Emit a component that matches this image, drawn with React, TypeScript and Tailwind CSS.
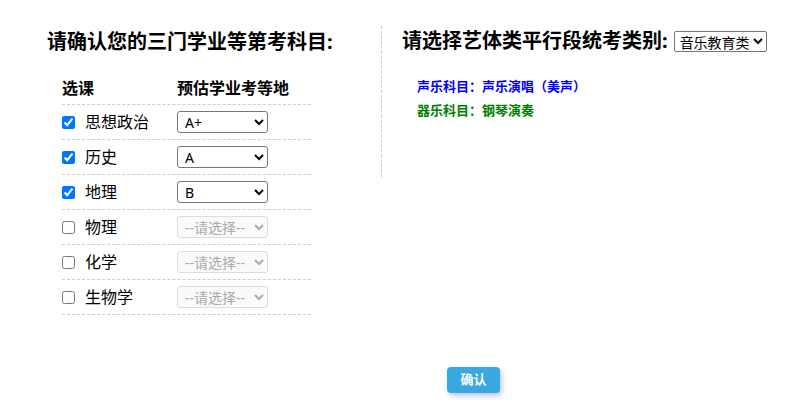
import React from 'react';

const font = { fontFamily: '"Noto Sans", "Noto Sans CJK SC", sans-serif' };

interface Subject {
  name: string;
  checked: boolean;
  grade: string;
}

const subjects: Subject[] = [
  { name: '思想政治', checked: true, grade: 'A+' },
  { name: '历史', checked: true, grade: 'A' },
  { name: '地理', checked: true, grade: 'B' },
  { name: '物理', checked: false, grade: '' },
  { name: '化学', checked: false, grade: '' },
  { name: '生物学', checked: false, grade: '' },
];

const grades = ['A+', 'A', 'B+', 'B', 'B-', 'C+', 'C', 'D', 'E'];

const SubjectRow = ({ s }: { s: Subject }) => (
  <div className="flex items-center h-[35px] border-b border-dashed border-[#cccccc]">
    <div className="w-[115px] flex items-center">
      <input type="checkbox" defaultChecked={s.checked} className="m-0 w-[13px] h-[13px]" />
      <span className="ml-[10px] text-[16px] text-black">{s.name}</span>
    </div>
    {s.checked ? (
      <select
        defaultValue={s.grade}
        className="w-[91px] h-[22px] border border-[#767676] rounded-[3px] bg-white text-[14px] text-black pl-[3px]"
      >
        {grades.map((g) => (
          <option key={g} value={g}>{g}</option>
        ))}
      </select>
    ) : (
      <select
        disabled
        defaultValue=""
        className="w-[91px] h-[22px] border border-[#dddddd] rounded-[3px] bg-[#fafafa] text-[14px] text-[#aaaaaa] pl-[3px]"
      >
        <option value="">--请选择--</option>
      </select>
    )}
  </div>
);

export default function App() {
  return (
    <div className="w-[786px] h-[412px] bg-white text-black overflow-hidden" style={font}>
      <div className="flex pt-[26px]">
        {/* left: subjects */}
        <div className="w-[381px] pl-[47px]">
          <h2 className="h-[32px] leading-[32px] text-[20px] font-bold">请确认您的三门学业等第考科目:</h2>
          <div className="ml-[15px] mt-[14px] w-[249px]">
            <div className="flex items-center h-[33px] border-b border-dashed border-[#cccccc] text-[16px] font-bold">
              <span className="w-[115px]">选课</span>
              <span>预估学业考等地</span>
            </div>
            {subjects.map((s) => (
              <SubjectRow key={s.name} s={s} />
            ))}
          </div>
        </div>

        {/* right: art category */}
        <div className="h-[151px] border-l border-dashed border-[#cccccc] pl-[20px]">
          <div className="flex items-center h-[30px]">
            <h2 className="text-[20px] font-bold">请选择艺体类平行段统考类别:</h2>
            <select className="ml-[6px] w-[93px] h-[21px] border border-[#767676] rounded-[2px] bg-white text-[14px] text-black pl-[1px]">
              <option>音乐教育类</option>
              <option>美术类</option>
              <option>体育类</option>
            </select>
          </div>
          <div className="ml-[15px] mt-[18px] text-[13px] font-bold leading-[24px]">
            <p className="text-[#0000ff]">声乐科目：声乐演唱（美声）</p>
            <p className="text-[#008000]">器乐科目：钢琴演奏</p>
          </div>
        </div>
      </div>

      <div className="pl-[447px] mt-[51px]">
        <button className="w-[53px] h-[26px] rounded-[4px] bg-[#3aa8e0] text-white text-[13px] font-bold shadow-[2px_3px_5px_rgba(60,100,220,0.35)]">
          确认
        </button>
      </div>
    </div>
  );
}
